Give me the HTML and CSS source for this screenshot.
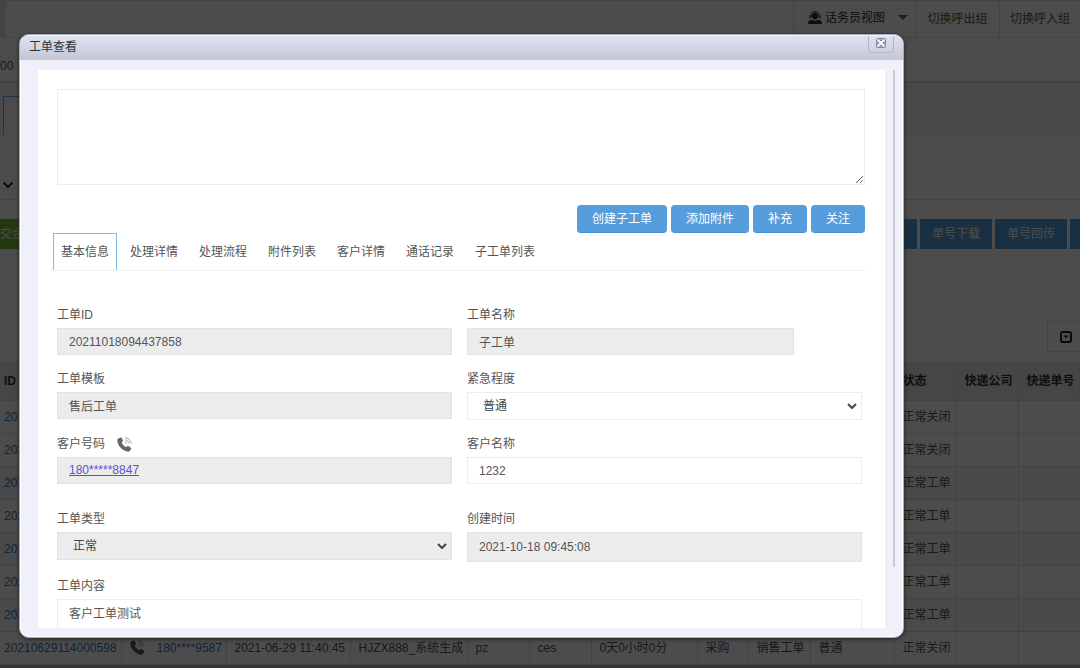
FILE: index.html
```html
<!DOCTYPE html>
<html lang="zh-CN">
<head>
<meta charset="utf-8">
<title>工单查看</title>
<link rel="stylesheet" href="styles.css">
</head>
<body>
<svg class="symbols" aria-hidden="true">
  <symbol id="phone" viewBox="0 0 15 15">
    <path fill="currentColor" d="M1.4 1.6 3.2.4c.5-.3 1-.1 1.3.4l1.4 2.4c.3.5.1 1-.3 1.3l-1 .8c.5 1.900 2.300 4 4.500 5l1-1c.4-.4 1-.5 1.400-.2l2.300 1.600c.5.300.600.900.300 1.300l-1.200 1.700c-.6.800-1.500 1.100-2.500.9C5 13.500.6 8.500.3 3.800c-.1-.9.300-1.700 1.100-2.200z"/>
    <path fill="none" stroke="currentColor" stroke-width="1" opacity=".6" d="M8.200 5c.9.100 1.600.8 1.700 1.700M8.300 2.900c2 .1 3.500 1.700 3.600 3.600M8.300.8c3.200.1 5.700 2.600 5.800 5.700"/>
  </symbol>
</svg>
<div class="page">
  <header class="topbar">
    <button class="view"><svg class="agent" viewBox="0 0 14 13" aria-hidden="true"><path fill="none" stroke="currentColor" stroke-width="1" d="M2.700 5.500V4.600a4.300 4.100 0 0 1 8.600 0v.9"/><path fill="currentColor" d="M1.500 4.300h1.700v2.900H1.500zM10.800 4.300h1.700v2.900h-1.700zM7 1.600c2 0 3.200 1.300 3.200 3.200S8.900 8.600 7 8.600 3.800 6.700 3.800 4.800 5 1.600 7 1.600zM.2 13v-1.700c0-1.200.8-1.900 2-2.100l2.200-.4L7 10.100l2.600-1.300 2.200.4c1.200.2 2 .9 2 2.100V13z"/></svg>话务员视图<span class="caret"></span></button>
    <button>切换呼出组</button>
    <button>切换呼入组</button>
  </header>
  <div class="info">00</div>
  <div class="strip"><div class="strip-tab"></div></div>
  <div class="filters"><svg class="chev" viewBox="0 0 12 8" aria-hidden="true"><path fill="none" stroke="currentColor" stroke-width="2" d="m1.500 1.500 4.500 4.500 4.500-4.500"/></svg></div>
  <div class="actions">
    <button class="green">交金</button>
    <button class="blank" aria-label="操作"></button>
    <button>单号下载</button>
    <button>单号回传</button>
    <button class="edge" aria-label="更多"></button>
  </div>
  <div class="tools"><button aria-label="列设置"><svg viewBox="0 0 12 12" aria-hidden="true"><rect x="1" y="1" width="10" height="10" rx="2" fill="none" stroke="currentColor" stroke-width="2"/><path fill="currentColor" d="M3.500 4.500h5L6 7.500z"/></svg></button></div>
  <table>
    <colgroup><col class="c1"><col class="c2"><col class="c3"><col class="c4"><col class="c5"><col class="c5"><col class="c6"><col class="c7"><col class="c5"><col class="c8"><col class="c5"><col class="c5"><col></colgroup>
    <thead><tr><th>ID</th><th></th><th></th><th></th><th></th><th></th><th></th><th></th><th></th><th></th><th>状态</th><th>快递公司</th><th>快递单号</th></tr></thead>
    <tbody>
      <tr><td><a href="#">202</a></td><td colspan="9"></td><td>正常关闭</td><td></td><td></td></tr>
      <tr><td><a href="#">202</a></td><td colspan="9"></td><td>正常关闭</td><td></td><td></td></tr>
      <tr class="alt"><td><a href="#">202</a></td><td colspan="9"></td><td>正常工单</td><td></td><td></td></tr>
      <tr><td><a href="#">202</a></td><td colspan="9"></td><td>正常工单</td><td></td><td></td></tr>
      <tr class="alt"><td><a href="#">202</a></td><td colspan="9"></td><td>正常工单</td><td></td><td></td></tr>
      <tr><td><a href="#">202</a></td><td colspan="9"></td><td>正常工单</td><td></td><td></td></tr>
      <tr class="alt"><td><a href="#">202</a></td><td colspan="9"></td><td>正常工单</td><td></td><td></td></tr>
      <tr><td><a href="#">20210629114000598</a></td><td><div class="call"><svg class="phone" aria-hidden="true"><use href="#phone"/></svg><a href="#">180****9587</a></div></td><td>2021-06-29 11:40:45</td><td>HJZX888_系统生成</td><td>pz</td><td>ces</td><td>0天0小时0分</td><td>采购</td><td>销售工单</td><td>普通</td><td>正常关闭</td><td></td><td></td></tr>
    </tbody>
  </table>
</div>
<div class="overlay"></div>
<section class="modal" role="dialog" aria-labelledby="title">
  <header class="modal-head">
    <h1 id="title">工单查看</h1>
    <button class="close" aria-label="关闭"><svg viewBox="0 0 10 10" aria-hidden="true"><rect x=".5" y=".5" width="9" height="9" rx="1" fill="#c9ccdb" stroke="#84889c"/><path fill="none" stroke="#777b90" stroke-width="4" d="m2.500 2.500 5 5m0-5-5 5"/><path fill="none" stroke="#fff" stroke-width="2" d="m2 2 6 6m0-6-6 6"/></svg></button>
  </header>
  <div class="modal-body">
    <main class="panel">
      <textarea class="note" aria-label="备注"></textarea>
      <div class="buttons"><button>创建子工单</button><button>添加附件</button><button>补充</button><button>关注</button></div>
      <nav class="tabs"><a class="active" href="#">基本信息</a><a href="#">处理详情</a><a href="#">处理流程</a><a href="#">附件列表</a><a href="#">客户详情</a><a href="#">通话记录</a><a href="#">子工单列表</a></nav>
      <form class="form">
        <div class="field"><label for="fid">工单ID</label><input id="fid" value="20211018094437858" readonly></div>
        <div class="field narrow"><label for="fname">工单名称</label><input id="fname" value="子工单" readonly></div>
        <div class="field"><label for="ftpl">工单模板</label><input id="ftpl" value="售后工单" readonly></div>
        <div class="field"><label for="furg">紧急程度</label><div class="pick"><select id="furg"><option>普通</option></select><svg viewBox="0 0 10 6" aria-hidden="true"><path d="m1 1 4 4 4-4"/></svg></div></div>
        <div class="field"><span class="caption">客户号码<svg class="phone" aria-hidden="true"><use href="#phone"/></svg></span><div class="number"><a href="#">180*****8847</a></div></div>
        <div class="field"><label for="fcust">客户名称</label><input id="fcust" value="1232"></div>
        <div class="field lower"><label for="ftype">工单类型</label><div class="pick off"><select id="ftype"><option>正常</option></select><svg viewBox="0 0 10 6" aria-hidden="true"><path d="m1 1 4 4 4-4"/></svg></div></div>
        <div class="field lower tall"><label for="ftime">创建时间</label><input id="ftime" value="2021-10-18 09:45:08" readonly></div>
        <div class="field wide"><label for="fbody">工单内容</label><textarea id="fbody">客户工单测试</textarea></div>
      </form>
    </main>
    <div class="scroll"></div>
  </div>
</section>
</body>
</html>
```
FILE: styles.css
```css
* { box-sizing: border-box; }
body, button, input, select, textarea { font: 12px/18px "Liberation Sans", "Noto Sans CJK SC", sans-serif; }
body { margin: 0; height: 100vh; overflow: hidden; color: #555; background: #b4b4b4; }
button { border: 0; padding: 0; white-space: nowrap; }
a { text-decoration: none; }
.symbols { display: none; }
.phone { width: 15px; height: 15px; flex: none; }

/* Work order list */
.page { background: #fff; overflow: hidden; }
.topbar { display: flex; justify-content: flex-end; height: 38px; border-top: 1px solid #ddd; border-bottom: 1px solid #e6e6e6; border-left: 6px solid #e4e4e4; }
.topbar button { width: 84px; color: #555; background: none; border-left: 1px solid #e0e0e0; }
.topbar button:last-child { width: 81px; }
.topbar .view { display: flex; align-items: center; width: 122px; padding: 0 7px 3px 14px; color: #333; }
.agent { width: 14px; height: 13px; margin-right: 3px; }
.caret { margin-left: auto; border: 5px solid transparent; border-top-color: #666; border-bottom: 0; }
.info { height: 43px; padding-top: 19px; }
.strip { height: 54px; padding: 13px 3px 0; background: #f3f6fc; border-top: 2px solid #dde2ea; border-bottom: 1px solid #dde2ea; }
.strip-tab { width: 64px; height: 39px; background: #fff; border: 1px solid #6bb3e0; border-bottom: 0; }
.filters { display: flex; align-items: center; height: 65px; margin-bottom: 19px; padding: 35px 2px 0; border-bottom: 1px solid #ddd; }
.chev { width: 12px; height: 8px; color: #222; }
.actions { display: flex; gap: 3px; height: 30px; }
.actions button { flex: none; width: 72px; color: #fff; background: #569ddd; }
.actions .green { width: 60px; text-align: left; background: #78b83a; }
.actions .blank { margin-left: auto; }
.actions .edge { width: 10px; }
.tools { display: flex; justify-content: flex-end; height: 113px; padding-top: 72px; }
.tools button { width: 33px; height: 31px; padding-left: 3px; color: #222; background: #fff; border: 1px solid #ddd; border-right: 0; }
.tools svg { width: 12px; height: 12px; vertical-align: middle; }
table { width: 100%; table-layout: fixed; border-collapse: collapse; }
.c1 { width: 121px; }
.c2 { width: 105px; }
.c3 { width: 124px; }
.c4 { width: 117px; }
.c5 { width: 62px; }
.c6 { width: 106px; }
.c7 { width: 51px; }
.c8 { width: 84px; }
th { height: 38px; padding: 0 8px; text-align: left; color: #333; background: #e6e9ec; border-right: 1px solid #dcdcdc; white-space: nowrap; }
td { height: 33px; padding: 0 8px; border: 1px solid #dcdcdc; white-space: nowrap; }
td:first-child, th:first-child { padding-left: 4px; border-left: 0; }
td:last-child { border-right: 0; }
td a { color: #337ab7; }
.alt { background: #f7f7f7; }
.call { display: flex; align-items: center; gap: 12px; }
.overlay { position: absolute; inset: 0; background: rgba(0, 0, 0, .7); }

/* Dialog */
.modal { position: absolute; inset: 34px 176px 30px 19px; display: flex; flex-direction: column; overflow: hidden; border: 1px solid #a9acbd; border-radius: 10px; background: #eff0fa; box-shadow: inset 0 0 0 1px #fff, 0 1px 4px #222; }
.modal-head { display: flex; justify-content: space-between; height: 25px; padding: 0 9px; border-top: 1px solid #f4f5fb; background: linear-gradient(#dfe2ef, #c3c6d7); }
h1 { margin: 0; font-size: 12px; font-weight: 400; line-height: 22px; color: #333; }
.close { width: 26px; height: 17px; background: none; border: 1px solid #b3b6c9; border-top: 0; border-radius: 0 0 4px 4px; }
.close svg { display: block; width: 10px; height: 10px; margin: 0 auto 2px; }
.modal-body { flex: 1; min-height: 0; display: flex; gap: 8px; padding: 10px 8px 9px 18px; }
.panel { flex: 1; overflow: hidden; padding: 19px 20px 0 19px; background: #fff; }
.scroll { width: 2px; height: 497px; background: #c8cad0; }
.note { display: block; width: 100%; height: 96px; border: 1px solid #ececec; }
textarea { outline: 0; }
.buttons { display: flex; justify-content: flex-end; gap: 4px; margin-top: 20px; }
.buttons button { height: 28px; padding: 0 15px; color: #fff; background: #569ddd; border-bottom: 1px solid #438fd5; border-radius: 4px; }
.tabs { display: flex; gap: 5px; margin-left: -4px; border-bottom: 1px solid #f2f2f2; }
.tabs a { height: 37px; padding: 10px 8px; color: #555; }
.tabs .active { padding: 9px 7px; border: 1px solid #7dbce4; border-bottom: 0; }
.form { display: grid; grid-template-columns: 1fr 1fr; gap: 15px; margin: 35px 3px 0 0; align-items: start; }
.field { display: grid; gap: 4px; }
.field input, .number, .pick, .field textarea { width: 100%; height: 27px; border: 1px solid #ededed; border-radius: 0; color: #555; background: #fff; }
.field input, .number { padding: 0 11px; line-height: 25px; }
.field input:read-only, .number { background: #ececec; border-color: #e2e2e2; }
.narrow { padding-right: 68px; }
.number a { color: #5a50d0; text-decoration: underline; }
.caption { display: flex; align-items: center; height: 18px; gap: 12px; }
.caption .phone { color: #666; }
.field .pick { display: grid; align-items: center; height: 28px; }
.pick select, .pick svg { grid-area: 1 / 1; }
.pick select { appearance: none; width: 100%; height: 26px; padding: 0 15px; color: #444; background: none; border: 0; }
.pick svg { justify-self: end; width: 10px; height: 6px; margin-right: 4px; fill: none; stroke: #444; stroke-width: 2; pointer-events: none; }
.field .off { background: #ececec; border-color: #e2e2e2; }
.lower { margin-top: 11px; }
.tall input { height: 30px; }
.wide { grid-column: 1 / -1; }
.field textarea { height: 80px; padding: 5px 11px; resize: none; }
```
